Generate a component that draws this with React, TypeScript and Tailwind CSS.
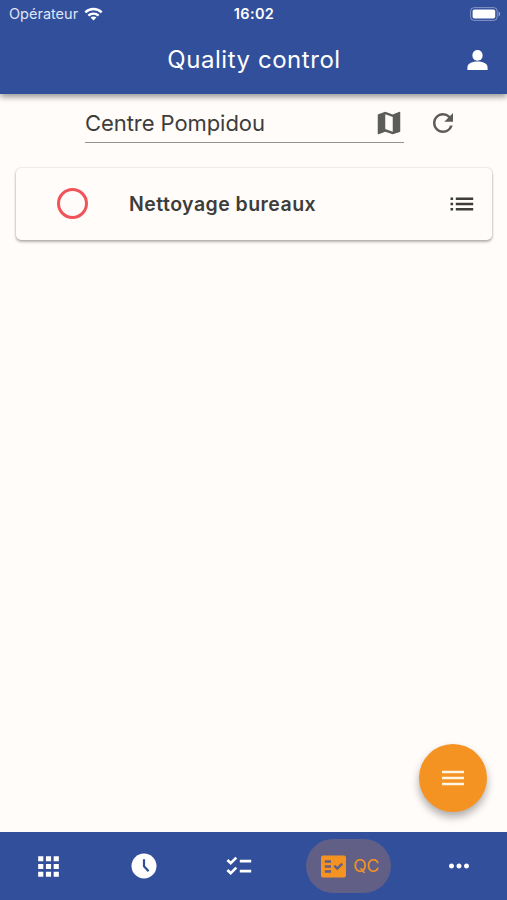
import type { ReactNode } from "react";
import { MdApps, MdMoreHoriz, MdMap, MdRefresh } from "react-icons/md";

function WifiIcon() {
  return (
    <svg width="19" height="14" viewBox="0 0 20 14" fill="none" stroke="white" strokeWidth="2.6">
      <path d="M1.4 5.3C6.2 .7 13.8 .7 18.6 5.3" />
      <path d="M4.6 8.7c3-2.8 7.8-2.8 10.8 0" />
      <path d="M10 13.8 6.9 10.7c1.8-1.6 4.4-1.6 6.2 0z" fill="white" stroke="none" />
    </svg>
  );
}

function BatteryIcon() {
  return (
    <svg width="31" height="14" viewBox="0 0 31 14" fill="none">
      <rect x=".6" y=".6" width="26.6" height="12.8" rx="3.6" stroke="white" strokeOpacity=".4" />
      <rect x="2.6" y="2.5" width="22.6" height="9" rx="1.8" fill="white" />
      <path d="M28.6 4.6c2 .8 2 4 0 4.8z" fill="white" fillOpacity=".5" />
    </svg>
  );
}

function PersonIcon() {
  return (
    <svg width="21" height="21" viewBox="0 0 21 21" fill="white">
      <rect x="5.4" y="0" width="10.2" height="10.8" rx="5.1" />
      <path d="M.4 20v-2.3c0-3.8 3.7-6.1 10.1-6.1s10.1 2.3 10.1 6.1V20z" />
    </svg>
  );
}

function ListIcon() {
  return (
    <svg width="24" height="14" viewBox="0 0 24 14" fill="currentColor">
      <path d="M.5.5h2.6v2.6H.5zM.5 5.7h2.6v2.6H.5zM.5 10.9h2.6v2.6H.5zM5.8.5h17.4v2.6H5.8zM5.8 5.7h17.4v2.6H5.8zM5.8 10.9h17.4v2.6H5.8z" />
    </svg>
  );
}

function MenuIcon() {
  return (
    <svg width="22" height="16" viewBox="0 0 22 16" fill="none" stroke="currentColor" strokeWidth="2.7">
      <path d="M0 2h22M0 8h22M0 14h22" />
    </svg>
  );
}

function ClockIcon() {
  return (
    <svg width="26" height="26" viewBox="0 0 26 26" fill="none">
      <circle cx="13" cy="13" r="12.5" fill="white" />
      <path d="M13 6.3v7l4.6 5" stroke="#324f9c" strokeWidth="2.2" />
    </svg>
  );
}

function ChecklistIcon() {
  return (
    <svg width="26" height="20" viewBox="0 0 26 20" fill="none" stroke="white" strokeWidth="2.7">
      <path d="m1.4 4 3.3 3.2 5.6-5.6M1.4 14l3.3 3.2 5.6-5.6M13.8 5.1h11.4M13.8 15.1h11.4" />
    </svg>
  );
}

function FactCheckIcon() {
  return (
    <svg width="25" height="23" viewBox="0 0 25 23" fill="none" stroke="#625f87" strokeWidth="2.5">
      <rect x="0" y=".4" width="25" height="22.2" rx="2" fill="#f49321" stroke="none" />
      <path d="M3.8 6.5h6.2M3.8 11.5h6.2M3.8 16.5h6.2M13.3 10.6l3 3 4.9-4.9" />
    </svg>
  );
}

function NavItem({ children }: { children: ReactNode }) {
  return <button className="flex h-[54px] w-[60px] items-center justify-center">{children}</button>;
}

export default function App() {
  return (
    <div className="flex h-[900px] w-[507px] flex-col overflow-hidden bg-[#fffcf9] font-['Inter','Liberation_Sans',sans-serif] text-[#3d3d3b]">
      <header className="z-10 h-[94px] shrink-0 bg-[#324f9c] text-white shadow-[0_3px_6px_rgba(0,0,0,0.4)]">
        <div className="grid h-[27px] grid-cols-3 items-center px-[9px]">
          <div className="flex items-center gap-[6px] text-[14.5px] text-[#dfe5f5]">
            <span>Opérateur</span>
            <WifiIcon />
          </div>
          <span className="pl-px text-center text-[14.5px] font-semibold tracking-[0.35px]">16:02</span>
          <div className="-mr-[3px] flex justify-end">
            <BatteryIcon />
          </div>
        </div>
        <div className="grid h-[66px] grid-cols-[60px_1fr_60px] items-center">
          <h1 className="col-start-2 pl-px text-center text-[24px] tracking-[0.55px]">Quality control</h1>
          <button className="ml-[20px]">
            <PersonIcon />
          </button>
        </div>
      </header>

      <main className="relative flex-1">
        <div className="flex pl-[85px]">
          <div className="flex h-[49px] w-[319px] items-center justify-between border-b border-[#929290] pt-[11px]">
            <span className="text-[22px] tracking-[-0.07px]">Centre Pompidou</span>
            <MdMap size={30} className="-mt-px text-[#5c5c5a]" />
          </div>
          <button className="ml-[24px] h-[49px] pt-[9px]">
            <MdRefresh size={30} className="text-[#5c5c5a]" />
          </button>
        </div>

        <section className="mr-[15px] ml-[16px] mt-[25px] flex h-[72px] items-center rounded-[5px] bg-[#fffcf9] pr-[18px] pl-[41px] shadow-[0_2px_3px_rgba(0,0,0,0.28),0_0_2px_rgba(0,0,0,0.22)]">
          <span className="-mt-px size-[31px] rounded-full border-[3px] border-[#f1535b]" />
          <span className="ml-[41px] pt-px text-[19.5px] font-semibold tracking-[0.46px]">Nettoyage bureaux</span>
          <span className="-mt-px ml-auto">
            <ListIcon />
          </span>
        </section>

        <button className="absolute right-[20px] bottom-[20px] flex size-[68px] items-center justify-center rounded-full bg-[#f49321] text-[#fff3e3] shadow-[0_5px_9px_rgba(0,0,0,0.32)]">
          <MenuIcon />
        </button>
      </main>

      <nav className="flex h-[68px] shrink-0 items-center justify-between bg-[#324f9c] px-[18px] text-white">
        <NavItem><MdApps size={31} /></NavItem>
        <div className="-ml-[2px]"><NavItem><ClockIcon /></NavItem></div>
        <div className="-ml-[3px]"><NavItem><ChecklistIcon /></NavItem></div>
        <button className="flex h-[54px] w-[85px] items-center gap-[7px] rounded-[27px] bg-[#625f87] pl-[15px] text-[#f49321]">
          <FactCheckIcon />
          <span className="text-[17.5px] tracking-[-0.2px]">QC</span>
        </button>
        <NavItem><MdMoreHoriz size={30} /></NavItem>
      </nav>
    </div>
  );
}
